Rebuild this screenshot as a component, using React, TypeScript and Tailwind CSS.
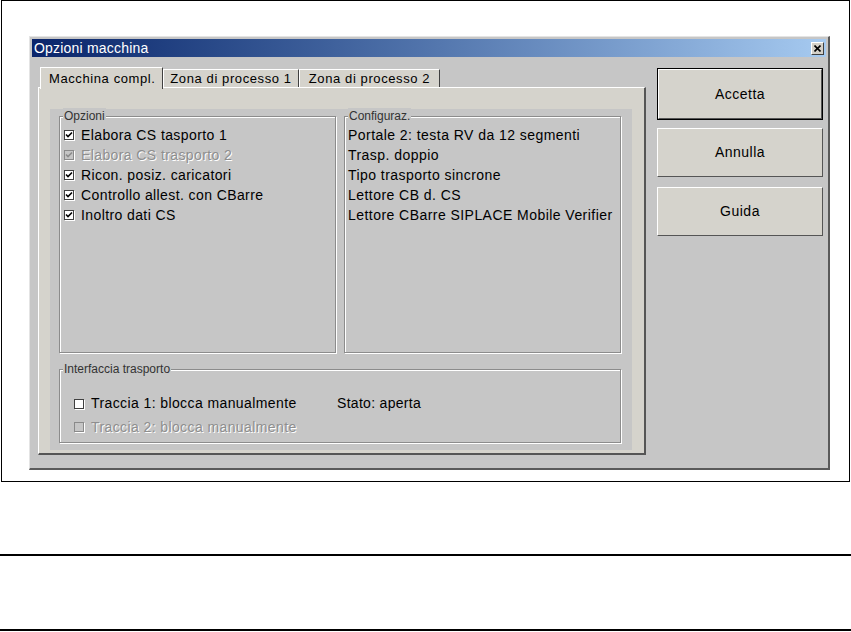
import React from "react";

const font = "font-['Liberation_Sans',Arial,sans-serif]";

const CheckBox = ({ checked, disabled }: { checked?: boolean; disabled?: boolean }) => (
  <span
    className={`flex h-[10px] w-[10px] shrink-0 items-center justify-center border ${
      disabled ? "border-[#8a8a8a] bg-[#c6c6c6]" : "border-[#404040] bg-white"
    } shadow-[1px_1px_0_#ffffff]`}
  >
    {checked && (
      <svg width="8" height="8" viewBox="0 0 8 8">
        <path
          d="M1 3.5 L3 5.5 L7 1.5"
          fill="none"
          stroke={disabled ? "#8a8a8a" : "#000"}
          strokeWidth="1.6"
        />
      </svg>
    )}
  </span>
);

const Row = ({ label, checked, disabled }: { label: string; checked?: boolean; disabled?: boolean }) => (
  <div className="flex h-[20px] items-center gap-[7px]">
    <CheckBox checked={checked} disabled={disabled} />
    <span
      className={`text-[14px] tracking-[0.4px] ${
        disabled ? "text-[#8e8e8e] [text-shadow:1px_1px_0_#ffffff]" : "text-black"
      }`}
    >
      {label}
    </span>
  </div>
);

const GroupBox = ({
  title,
  className,
  children,
}: {
  title: string;
  className: string;
  children: React.ReactNode;
}) => (
  <div
    className={`relative border border-[#8c8c8c] shadow-[inset_1px_1px_0_#ffffff,1px_1px_0_#ffffff] ${className}`}
  >
    <span className="absolute -top-[9px] left-[3px] bg-[#c6c6c6] px-[1px] text-[12px] leading-[16px] text-[#333]">
      {title}
    </span>
    {children}
  </div>
);

const Button = ({ label, isDefault }: { label: string; isDefault?: boolean }) => (
  <div className={isDefault ? "border border-black" : ""}>
    <div
      className={`flex items-center justify-center border-t border-l border-white border-r border-b border-r-[#555] border-b-[#555] bg-[#d5d3cc] text-[14px] tracking-[0.5px] text-black ${
        isDefault ? "h-[50px]" : "h-[49px]"
      }`}
    >
      {label}
    </div>
  </div>
);

const Tab = ({ label, active, width }: { label: string; active?: boolean; width: string }) => (
  <div
    className={`flex items-center border-t border-l border-white border-r border-r-[#404040] bg-[#d5d3cc] text-[13px] tracking-[0.6px] text-black ${width} ${
      active ? "relative z-10 -mb-[2px] h-[22px] pl-[8px]" : "mt-[2px] h-[18px] justify-center"
    }`}
  >
    {label}
  </div>
);

export default function App() {
  return (
    <div className={`h-[632px] w-[851px] bg-white ${font}`}>
      <div className="ml-[1px] h-[482px] w-[849px] border border-black pl-[27px] pt-[35px]">
        {/* dialog */}
        <div className="h-[434px] w-[801px] border-t border-l border-[#e4e4e4] border-r-2 border-b-2 border-r-[#5a5a5a] border-b-[#5a5a5a] bg-[#c6c6c6] p-[2px]">
          <div className="flex h-[18px] items-center justify-between bg-gradient-to-r from-[#0a246a] to-[#a6caf0] pl-[2px] pr-[2px]">
            <span className="text-[14px] tracking-[0.2px] text-white">Opzioni macchina</span>
            <span className="flex h-[13px] w-[13px] items-center justify-center border-t border-l border-white border-r border-b border-r-[#404040] border-b-[#404040] bg-[#d4d0c8]">
              <svg width="7" height="7" viewBox="0 0 7 7">
                <path d="M0.5 0.5 L6.5 6.5 M6.5 0.5 L0.5 6.5" stroke="#000" strokeWidth="1.6" />
              </svg>
            </span>
          </div>

          <div className="flex pl-[6px] pt-[10px]">
            {/* tabs + panel */}
            <div className="w-[608px]">
              <div className="flex h-[20px] pl-[2px]">
                <Tab label="Macchina compl." active width="w-[123px]" />
                <Tab label="Zona di processo 1" width="w-[136px]" />
                <Tab label="Zona di processo 2" width="w-[141px]" />
              </div>
              <div className="h-[368px] border-t border-l border-white border-r-2 border-b-2 border-r-[#555] border-b-[#555] bg-[#d5d3cc] pl-[11px] pr-[12px] pt-[21px]">
                <div className="h-[341px] bg-[#c6c6c6] pl-[9px] pt-[7px]">
                  <div className="flex gap-[8px]">
                    <GroupBox title="Opzioni" className="h-[237px] w-[277px] pl-[4px] pt-[8px]">
                      <Row label="Elabora CS tasporto 1" checked />
                      <Row label="Elabora CS trasporto 2" checked disabled />
                      <Row label="Ricon. posiz. caricatori" checked />
                      <Row label="Controllo allest. con CBarre" checked />
                      <Row label="Inoltro dati CS" checked />
                    </GroupBox>
                    <GroupBox title="Configuraz." className="h-[237px] w-[277px] pl-[3px] pt-[8px]">
                      {[
                        "Portale 2: testa RV da 12 segmenti",
                        "Trasp. doppio",
                        "Tipo trasporto sincrone",
                        "Lettore CB d. CS",
                        "Lettore CBarre SIPLACE Mobile Verifier",
                      ].map((t) => (
                        <div key={t} className="flex h-[20px] items-center text-[14px] tracking-[0.45px] text-black">
                          {t}
                        </div>
                      ))}
                    </GroupBox>
                  </div>
                  <GroupBox title="Interfaccia trasporto" className="mt-[16px] h-[74px] w-[562px] pl-[14px] pt-[23px]">
                    <div className="flex items-center">
                      <div className="w-[263px]">
                        <Row label="Traccia 1: blocca manualmente" />
                      </div>
                      <span className="text-[14px] tracking-[0.3px] text-black">Stato: aperta</span>
                    </div>
                    <div className="mt-[3px]">
                      <Row label="Traccia 2: blocca manualmente" disabled />
                    </div>
                  </GroupBox>
                </div>
              </div>
            </div>

            {/* buttons */}
            <div className="ml-[11px] mt-[1px] flex w-[166px] flex-col gap-[8px]">
              <Button label="Accetta" isDefault />
              <Button label="Annulla" />
              <div className="mt-[2px]">
                <Button label="Guida" />
              </div>
            </div>
          </div>
        </div>
      </div>
      <div className="mt-[72px] border-t-2 border-black" />
      <div className="mt-[73px] border-t-2 border-black" />
    </div>
  );
}
